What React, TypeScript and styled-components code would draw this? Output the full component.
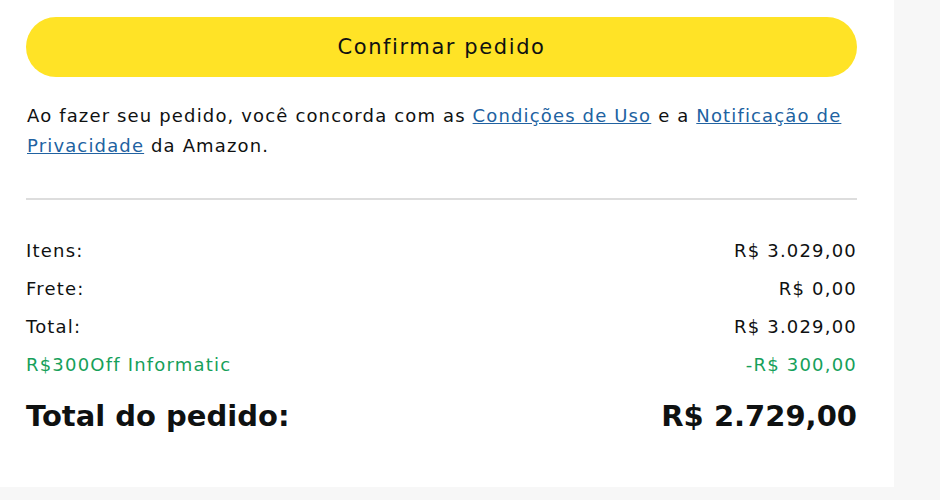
import React from "react";
import styled, { createGlobalStyle } from "styled-components";

const Global = createGlobalStyle`
  html, body { margin: 0; padding: 0; background: #f7f7f7; }
  body { font-family: "DejaVu Sans", "Noto Sans", sans-serif; color: #0f1111; }
`;

const Panel = styled.div`
  width: 894px;
  height: 487px;
  box-sizing: border-box;
  background: #ffffff;
  padding: 17px 37px 0 26px;
  display: flex;
  flex-direction: column;
`;

const ConfirmButton = styled.button`
  height: 60px;
  width: 100%;
  border: none;
  border-radius: 30px;
  background: #ffe326;
  font-family: inherit;
  font-size: 21px;
  letter-spacing: 1.6px;
  color: #0f1111;
  cursor: pointer;
`;

const Legal = styled.p`
  margin: 24px 0 0 1px;
  font-size: 18px;
  line-height: 30px;
  letter-spacing: 1.15px;
`;

const Link = styled.a`
  color: #2162a1;
  text-decoration: underline;
`;

const Divider = styled.hr`
  margin: 37px 0 0 0;
  border: none;
  border-top: 2px solid #dddddd;
`;

const Summary = styled.div`
  margin-top: 32px;
  display: flex;
  flex-direction: column;
`;

const Row = styled.div<{ $green?: boolean }>`
  display: flex;
  justify-content: space-between;
  font-size: 18px;
  line-height: 38px;
  letter-spacing: 1.2px;
  color: ${(p) => (p.$green ? "#16a05a" : "#0f1111")};
`;

const TotalRow = styled.div`
  display: flex;
  justify-content: space-between;
  font-size: 29px;
  font-weight: 700;
  line-height: 50px;
  margin-top: 7px;
`;

export default function App() {
  return (
    <>
      <Global />
      <Panel>
        <ConfirmButton>Confirmar pedido</ConfirmButton>
        <Legal>
          Ao fazer seu pedido, você concorda com as <Link href="#">Condições de Uso</Link> e a{" "}
          <Link href="#">Notificação de Privacidade</Link> da Amazon.
        </Legal>
        <Divider />
        <Summary>
          <Row><span>Itens:</span><span>R$ 3.029,00</span></Row>
          <Row><span>Frete:</span><span>R$ 0,00</span></Row>
          <Row><span>Total:</span><span>R$ 3.029,00</span></Row>
          <Row $green><span>R$300Off Informatic</span><span>-R$ 300,00</span></Row>
          <TotalRow><span>Total do pedido:</span><span>R$ 2.729,00</span></TotalRow>
        </Summary>
      </Panel>
    </>
  );
}
